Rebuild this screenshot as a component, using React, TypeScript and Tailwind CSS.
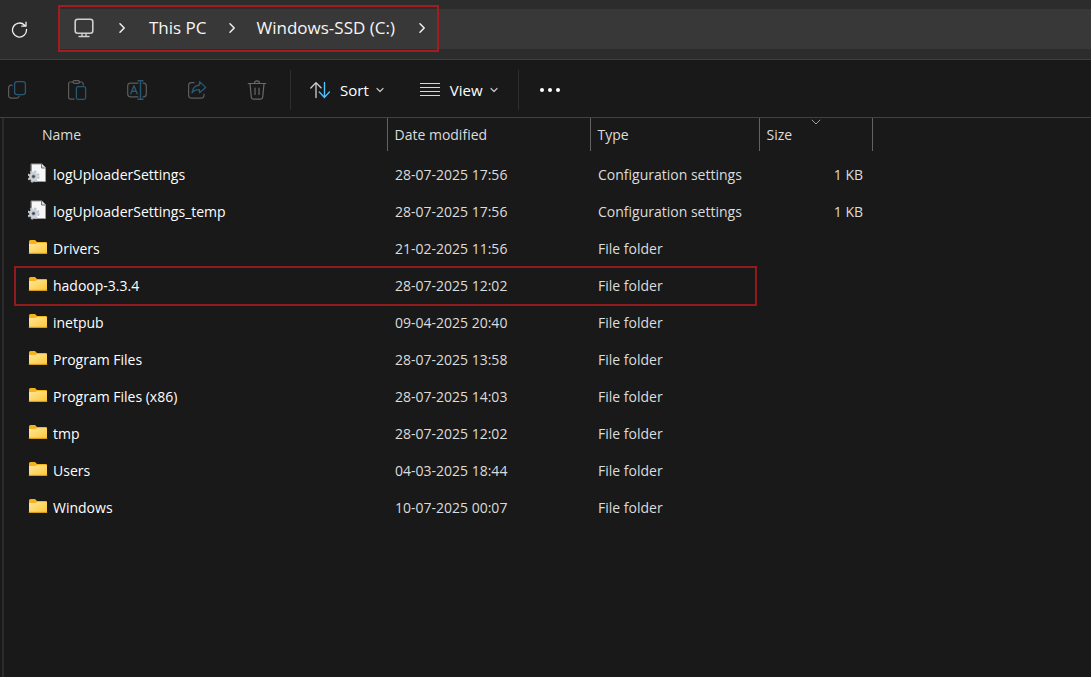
import type { ReactNode } from "react";

type Entry = { name: string; date: string; kind: "config" | "folder"; size?: string; marked?: boolean };

const entries: Entry[] = [
  { name: "logUploaderSettings", date: "28-07-2025 17:56", kind: "config", size: "1 KB" },
  { name: "logUploaderSettings_temp", date: "28-07-2025 17:56", kind: "config", size: "1 KB" },
  { name: "Drivers", date: "21-02-2025 11:56", kind: "folder" },
  { name: "hadoop-3.3.4", date: "28-07-2025 12:02", kind: "folder", marked: true },
  { name: "inetpub", date: "09-04-2025 20:40", kind: "folder" },
  { name: "Program Files", date: "28-07-2025 13:58", kind: "folder" },
  { name: "Program Files (x86)", date: "28-07-2025 14:03", kind: "folder" },
  { name: "tmp", date: "28-07-2025 12:02", kind: "folder" },
  { name: "Users", date: "04-03-2025 18:44", kind: "folder" },
  { name: "Windows", date: "10-07-2025 00:07", kind: "folder" },
];

const GREY = "#5c5c5c";
const BLUE = "#285872";

function Icon({ children, size = 20, className = "" }: { children: ReactNode; size?: number; className?: string }) {
  return (
    <svg width={size} height={size} viewBox={`0 0 ${size} ${size}`} fill="none" strokeLinecap="round" strokeLinejoin="round" className={`shrink-0 ${className}`} aria-hidden="true">
      {children}
    </svg>
  );
}

function RefreshIcon() {
  return (
    <Icon size={18}>
      <path d="M14.6 5.2A7 7 0 1 0 16.5 9.500M16 2.200v4h-4.200" stroke="#f0f0f0" strokeWidth="1.3" />
    </Icon>
  );
}

function MonitorIcon() {
  return (
    <Icon>
      <rect x="1.2" y="1.2" width="17.6" height="14" rx="2.5" stroke="#cfcfcf" strokeWidth="1.6" />
      <path d="M8 15.5v3M12 15.5v3M5 18.5h10" stroke="#cfcfcf" strokeWidth="1.4" />
    </Icon>
  );
}

function CrumbArrow() {
  return (
    <Icon size={10}>
      <path d="M3 0.8 7.2 5 3 9.2" stroke="#f0f0f0" strokeWidth="1.5" />
    </Icon>
  );
}

function Caret() {
  return (
    <Icon size={8}>
      <path d="M1 2.5 4 5.5 7 2.5" stroke="#c4c4c4" strokeWidth="1.2" />
    </Icon>
  );
}

function CopyIcon() {
  return (
    <Icon>
      <path d="M5 5.2H4.2A2.6 2.6 0 0 0 1.6 7.8v7.8a2.6 2.6 0 0 0 2.6 2.6h5.4a2.6 2.6 0 0 0 2.6-2" stroke={GREY} strokeWidth="1.2" />
      <rect x="7.6" y="1.6" width="10.8" height="13" rx="2.4" stroke={BLUE} strokeWidth="1.3" />
    </Icon>
  );
}

function PasteIcon() {
  return (
    <Icon>
      <path d="M6.500 2H3.400A1.800 1.800 0 0 0 1.600 3.800v13.600a1.800 1.800 0 0 0 1.800 1.800H7M12 2h2.600a1.800 1.800 0 0 1 1.600 1.600V5" stroke={GREY} strokeWidth="1.200" />
      <rect x="6" y="0.700" width="6.500" height="2.600" rx="1.300" stroke={GREY} strokeWidth="1.200" />
      <rect x="9.400" y="6.700" width="9.200" height="12.600" rx="1.500" stroke={BLUE} strokeWidth="1.300" />
    </Icon>
  );
}

function RenameIcon() {
  return (
    <Icon>
      <path d="M11 3.200H3.400A2.800 2.800 0 0 0 .7 6v8a2.800 2.800 0 0 0 2.700 2.800H11M16 3.200h.6A2.800 2.800 0 0 1 19.300 6v8a2.800 2.800 0 0 1-2.700 2.800H16" stroke={GREY} strokeWidth="1.200" />
      <path d="M3.800 13.800 7 5.800l3.200 8M5 11.300h4M13.500.7v18.600M11 .7h5M11 19.300h5" stroke={BLUE} strokeWidth="1.400" />
    </Icon>
  );
}

function ShareIcon() {
  return (
    <Icon>
      <path d="M7 2.700H4.400A2.800 2.800 0 0 0 1.600 5.500v9.800a2.800 2.800 0 0 0 2.800 2.800h9.800a2.800 2.800 0 0 0 2.800-2.800V14" stroke={GREY} strokeWidth="1.200" />
      <path d="M12.500 1.600 18.700 7.400l-6.200 5.400V9.600c-3.400-.1-5.600.8-7.500 3.200.6-4.500 3-7.400 7.500-7.800Z" stroke={BLUE} strokeWidth="1.300" />
    </Icon>
  );
}

function TrashIcon() {
  return (
    <Icon>
      <path d="M1.200 3.500h17.600M7.500 3.300a2.500 2.500 0 0 1 5 0M3 3.700l1.300 13.500a2 2 0 0 0 2 1.900h7.400a2 2 0 0 0 2-1.900L17 3.700M8 8v6.500M12 8v6.500" stroke="#696969" strokeWidth="1.200" />
    </Icon>
  );
}

function SortIcon() {
  return (
    <Icon>
      <path d="M6 17.500V3M.8 8 6 2.600 11 7.800" stroke="#d0d0d0" strokeWidth="1.300" />
      <path d="M14.500 2.500v14.600M9.300 12l5.200 5.400L19.400 12" stroke="#4cc2ff" strokeWidth="1.400" />
    </Icon>
  );
}

function LinesIcon() {
  return (
    <Icon>
      <path d="M0 3.500h20M0 7.500h20M0 11.500h20M0 15.500h20" stroke="#d6d6d6" strokeWidth="1.200" strokeLinecap="butt" />
    </Icon>
  );
}

function FolderIcon() {
  return (
    <Icon className="mb-1">
      <defs>
        <linearGradient id="folder-front" x1="0" y1="0" x2="1" y2="1">
          <stop offset="0" stopColor="#ffe69a" />
          <stop offset="1" stopColor="#fcc838" />
        </linearGradient>
      </defs>
      <path d="M1 4.500A1.500 1.500 0 0 1 2.500 3H7l2 2h9a1 1 0 0 1 1 1v5H1Z" fill="#f5b21b" />
      <path d="M1 7h6.500l1.500-1h9a1 1 0 0 1 1 1V15.500a1 1 0 0 1-1 1H2a1 1 0 0 1-1-1Z" fill="url(#folder-front)" />
      <path d="M1.200 16.300h17.600" stroke="#e9a71c" strokeWidth="1" />
    </Icon>
  );
}

function ConfigIcon() {
  return (
    <Icon className="mb-1">
      <path d="M3.500 1h10.500l3.500 3.500v14H3.500Z" fill="#f7f7f7" stroke="#9b9b9b" strokeWidth="1" />
      <path d="M13.500 1.500V5H17" fill="#d5d5d5" stroke="#777" strokeWidth="1" />
      <circle cx="5.500" cy="13.500" r="5" stroke="#b9c1c9" strokeWidth="2.200" strokeDasharray="2.200 1.727" strokeLinecap="butt" />
      <circle cx="5.500" cy="13.500" r="3.200" fill="#8f99a3" stroke="#ccd2d8" strokeWidth="2.400" />
      <circle cx="5.500" cy="13.500" r="1.200" fill="#3c454e" />
    </Icon>
  );
}

const tools = [
  { label: "Copy", icon: <CopyIcon /> },
  { label: "Paste", icon: <PasteIcon /> },
  { label: "Rename", icon: <RenameIcon /> },
  { label: "Share", icon: <ShareIcon /> },
  { label: "Delete", icon: <TrashIcon /> },
];

function AddressBar() {
  return (
    <header className="flex h-15 items-center border-b border-[#404040] bg-[#2c2c2c] pb-0.5">
      <button type="button" aria-label="Refresh" className="flex w-[58px] shrink-0 pl-[10px]">
        <RefreshIcon />
      </button>
      <nav aria-label="Address" className="flex h-10 grow items-center bg-[#383838] text-[#f5f5f5]">
        <div className="-my-1 flex h-[47px] shrink-0 items-center border-2 border-[#a31d20] pr-[10px] pb-0.5 pl-[14px] text-[17px]">
          <button type="button" aria-label="Location"><MonitorIcon /></button>
          <span className="ml-[23px]"><CrumbArrow /></span>
          <a href="#this-pc" className="ml-[22px]">This PC</a>
          <span className="ml-5"><CrumbArrow /></span>
          <a href="#c" className="ml-5">Windows-SSD (C:)</a>
          <span className="ml-[22px]"><CrumbArrow /></span>
        </div>
      </nav>
    </header>
  );
}

function Toolbar() {
  return (
    <div role="toolbar" aria-label="Commands" className="flex h-[58px] items-center border-b border-[#404040] pt-0.5 text-[15px] text-white">
      <div className="flex items-center gap-10 pr-[23px] pl-[7px]">
        {tools.map((tool) => (
          <button key={tool.label} type="button" aria-label={tool.label}>{tool.icon}</button>
        ))}
      </div>
      <div className="flex h-10 items-center gap-9 border-x border-[#2e2e2e] pr-5 pl-[19px]">
        <button type="button" className="flex items-center">
          <SortIcon />
          <span className="mr-[7px] ml-[10px]">Sort</span>
          <Caret />
        </button>
        <button type="button" className="flex items-center">
          <LinesIcon />
          <span className="mr-[7px] ml-[10px]">View</span>
          <Caret />
        </button>
      </div>
      <button type="button" aria-label="See more" className="ml-5">
        <Icon size={22}>
          <g fill="#fff">
            <circle cx="3" cy="11" r="2" />
            <circle cx="11" cy="11" r="2" />
            <circle cx="19" cy="11" r="2" />
          </g>
        </Icon>
      </button>
    </div>
  );
}

function FileTable() {
  return (
    <table className="w-[867px] table-fixed border-collapse self-start text-left text-[#dcdcdc]">
      <colgroup>
        <col className="w-[382px]" />
        <col className="w-[203px]" />
        <col className="w-[169px]" />
        <col className="w-[113px]" />
      </colgroup>
      <thead>
        <tr className="h-[33px] *:border-r *:border-[#636363] *:p-0 *:font-normal">
          <th scope="col" className="indent-[37px]">Name</th>
          <th scope="col" className="indent-[7px]">Date modified</th>
          <th scope="col" className="indent-[7px]">Type</th>
          <th scope="col" className="relative indent-[7px]">
            Size
            <svg width="10" height="6" viewBox="0 0 10 6" fill="none" className="absolute top-px left-1/2 -translate-x-1/2" aria-hidden="true">
              <path d="M.8.800 5 5 9.200.800" stroke="#a0a0a0" />
            </svg>
          </th>
        </tr>
      </thead>
      <tbody>
        <tr className="h-[5px]" aria-hidden="true"><td colSpan={4} className="p-0" /></tr>
        {entries.map((entry) => (
          <tr key={entry.name} className="relative h-[37px] *:p-0">
            <td>
              <a href={`#${entry.name}`} className="flex items-center gap-[5px] pl-[23px] text-white">
                {entry.kind === "folder" ? <FolderIcon /> : <ConfigIcon />}
                {entry.name}
              </a>
              {entry.marked && <span className="pointer-events-none absolute -top-px left-[9px] h-10 w-[743px] border-2 border-[#901a1c]" />}
            </td>
            <td><span className="pl-2">{entry.date}</span></td>
            <td><span className="pl-2">{entry.kind === "folder" ? "File folder" : "Configuration settings"}</span></td>
            <td className="text-right"><span className="pr-[9px]">{entry.size}</span></td>
          </tr>
        ))}
      </tbody>
    </table>
  );
}

export default function App() {
  return (
    <div className="flex min-h-screen flex-col bg-[#191919] font-['Open_Sans','Noto_Sans',sans-serif] text-[14px] leading-5">
      <AddressBar />
      <Toolbar />
      <main className="flex grow">
        <div className="ml-0.5 w-[3px] shrink-0 border-l-2 border-[#2b2b2b]" />
        <FileTable />
      </main>
    </div>
  );
}
